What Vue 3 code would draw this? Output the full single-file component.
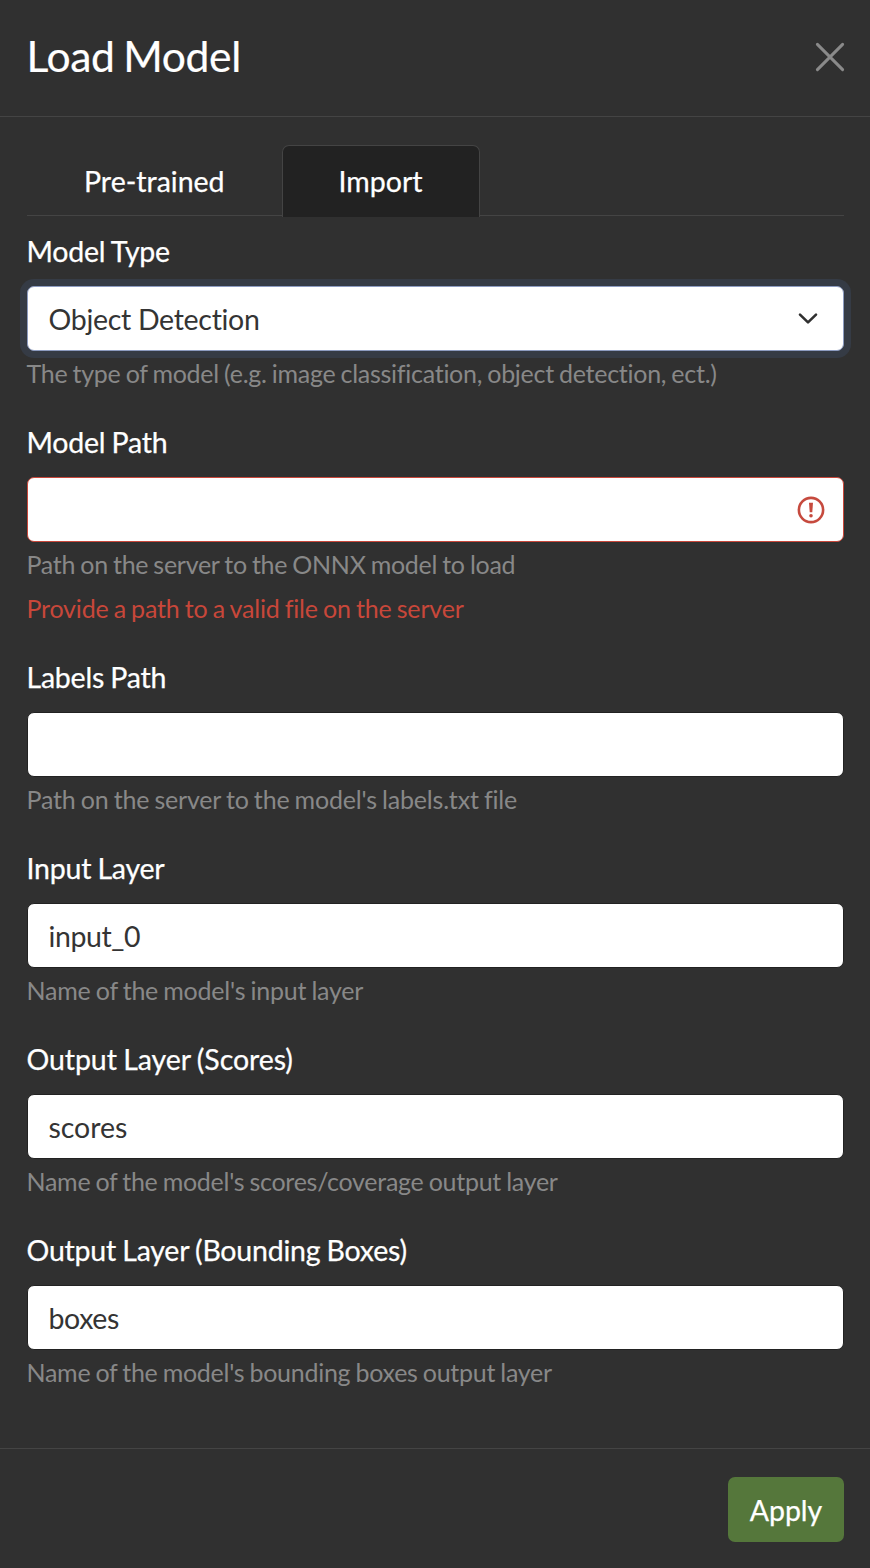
<script setup>
const fields = [
  { label: 'Model Type', value: 'Object Detection', help: 'The type of model (e.g. image classification, object detection, ect.)', kind: 'select' },
  { label: 'Model Path', value: '', help: 'Path on the server to the ONNX model to load', kind: 'invalid', error: 'Provide a path to a valid file on the server' },
  { label: 'Labels Path', value: '', help: "Path on the server to the model's labels.txt file", kind: 'labels' },
  { label: 'Input Layer', value: 'input_0', help: "Name of the model's input layer", kind: 'input' },
  { label: 'Output Layer (Scores)', value: 'scores', help: "Name of the model's scores/coverage output layer", kind: 'scores' },
  { label: 'Output Layer (Bounding Boxes)', value: 'boxes', help: "Name of the model's bounding boxes output layer", kind: 'boxes' },
]
</script>

<template>
  <div class="modal">
    <header>
      <h1>Load Model</h1>
      <svg class="close" width="30" height="30" viewBox="0 0 30 30"><path d="M2.4 2.4L27.6 27.6M27.6 2.4L2.4 27.6" /></svg>
    </header>
    <main>
      <nav>
        <div class="tab">Pre-trained</div>
        <div class="tab active">Import</div>
      </nav>
      <div v-for="f in fields" :key="f.label" class="field">
        <div class="label" :class="f.kind + '-label'">{{ f.label }}</div>
        <div class="control" :class="f.kind">
          <span>{{ f.value }}</span>
          <svg v-if="f.kind === 'select'" class="chev" width="28" height="28" viewBox="0 0 28 28"><path d="M6 9.6L14 17.4L22 9.6" /></svg>
          <svg v-if="f.kind === 'invalid'" class="warn" width="28" height="28" viewBox="0 0 28 28"><circle cx="14" cy="14" r="12.1" /><path class="dot" d="M12 6.8H16L15.3 16.2H12.7Z" /><circle class="dot" cx="14" cy="19.7" r="1.8" /></svg>
        </div>
        <div class="help" :class="f.kind + '-help'">{{ f.help }}</div>
        <div v-if="f.error" class="help error">{{ f.error }}</div>
      </div>
    </main>
    <footer><button>Apply</button></footer>
  </div>
</template>

<style>
body { margin: 0; background: #303030; }
</style>
<style scoped>
* { box-sizing: border-box; }
.modal { height: 1568px; display: flex; flex-direction: column; background: #303030; color: #fff; font-family: Lato, sans-serif; font-size: 28.5px; line-height: 42px; overflow: hidden; }
header { height: 117px; border-bottom: 1px solid #444; padding: 0 25px 3px 26.5px; display: flex; align-items: center; justify-content: space-between; }
h1 { margin: 0 0 2px; font-size: 42.6px; font-weight: 400; line-height: 60px; letter-spacing: -0.36px; word-spacing: -1.8px; -webkit-text-stroke: 0.2px #fff; }
.close { fill: none; stroke: #8a8a8a; stroke-width: 3; stroke-linecap: round; }
main { flex: 1; padding: 28px 26px 0 27px; }
nav { height: 71px; display: flex; border-bottom: 1px solid #444; margin-bottom: 14px; }
.tab { height: 72px; padding: 14px 56px 0; border: 1px solid transparent; border-bottom: 0; border-radius: 7px 7px 0 0; -webkit-text-stroke: 0.25px #fff; }
.tab.active { background: #222; border-color: #444; }
.field { margin-bottom: 27px; }
.label { height: 56px; margin-left: -0.5px; letter-spacing: -0.22px; word-spacing: -0.8px; -webkit-text-stroke: 0.25px #fff; }
.scores-label { letter-spacing: -0.08px; }
.control { height: 65px; background: #fff; color: #343434; border: 1px solid #222; border-radius: 7px; padding: 0 18px 0 20.5px; display: flex; align-items: center; justify-content: space-between; letter-spacing: -0.4px; }
.select { border-color: #8c9bc0; box-shadow: 0 0 0 7px #353b45; padding-right: 21px; letter-spacing: -0.3px; }
.scores { letter-spacing: -0.05px; }
.invalid { border-color: #c8473a; }
.chev { fill: none; stroke: #303030; stroke-width: 2.6; stroke-linecap: round; stroke-linejoin: round; }
.warn { fill: none; stroke: #c64a3e; stroke-width: 2.6; }
.dot { fill: #c64a3e; stroke: none; }
.help { height: 38px; margin-top: 5px; margin-left: -0.5px; font-size: 25px; line-height: 34px; color: #888; letter-spacing: -0.27px; word-spacing: -1px; white-space: nowrap; }
.invalid-help { letter-spacing: -0.28px; }
.labels-help { letter-spacing: -0.19px; }
.input-help { letter-spacing: -0.22px; }
.error { color: #c8473a; margin-top: 6px; letter-spacing: -0.19px; }
footer { height: 120px; border-top: 1px solid #444; padding: 28px 26px 0; display: flex; justify-content: flex-end; }
button { width: 116px; height: 65px; padding: 0; border: 0; border-radius: 7px; background: #55773b; color: #fff; font: 28.5px Lato, sans-serif; -webkit-text-stroke: 0.25px #fff; }
</style>
